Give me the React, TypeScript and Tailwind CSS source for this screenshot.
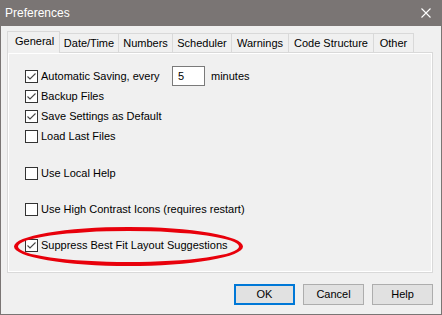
import React from "react";

const tabs = [
  { label: "General", w: "w-[53px]", active: true },
  { label: "Date/Time", w: "w-[60px]" },
  { label: "Numbers", w: "w-[55px]" },
  { label: "Scheduler", w: "w-[60px]" },
  { label: "Warnings", w: "w-[58px]" },
  { label: "Code Structure", w: "w-[86px]" },
  { label: "Other", w: "w-[41px]" },
];

const CheckBox = ({ checked }: { checked?: boolean }) => (
  <span className="mt-[4px] flex h-[13px] w-[13px] shrink-0 items-center justify-center border border-[#333333] bg-white">
    {checked && (
      <svg width="11" height="11" viewBox="0 0 11 11">
        <polyline
          points="1.5,5.5 4,8 9.5,2.5"
          fill="none"
          stroke="#444444"
          strokeWidth="1.1"
        />
      </svg>
    )}
  </span>
);

const Option = ({
  label,
  checked,
  className = "",
}: {
  label: string;
  checked?: boolean;
  className?: string;
}) => (
  <div className={`flex h-5 items-start ${className}`}>
    <CheckBox checked={checked} />
    <span className="ml-[3px] leading-5">{label}</span>
  </div>
);

const DialogButton = ({ label, primary }: { label: string; primary?: boolean }) => (
  <button
    className={`flex h-[21px] w-[61px] items-center justify-center bg-[#e1e1e1] leading-none text-black ${
      primary ? "border-2 border-[#0078d7]" : "border border-[#adadad]"
    }`}
  >
    {label}
  </button>
);

export default function App() {
  return (
    <div className="relative flex h-[315px] w-[442px] flex-col border border-t-0 border-[#7a7574] bg-[#f0f0f0] font-['Liberation_Sans',Arial,sans-serif] text-[11px] text-black">
      {/* title bar */}
      <div className="-mx-px flex h-[26px] shrink-0 items-center justify-between bg-[#7a7574] pl-[5px] pr-[11px] text-[12px] text-white">
        <span>Preferences</span>
        <svg width="10" height="10" viewBox="0 0 10 10">
          <path d="M0.5 0.5 L9.5 9.5 M9.5 0.5 L0.5 9.5" stroke="#ffffff" strokeWidth="1.1" />
        </svg>
      </div>

      <div className="flex flex-1 flex-col pl-[6px] pr-[8px] pt-[5px]">
        {/* tabs */}
        <div className="flex h-[21px] items-end">
          {tabs.map((t) =>
            t.active ? (
              <div
                key={t.label}
                className={`relative z-10 -mb-px flex h-[22px] ${t.w} shrink-0 items-center border border-b-0 border-[#d9d9d9] bg-[#f0f0f0] pb-[2px] pl-[7px]`}
              >
                {t.label}
              </div>
            ) : (
              <div
                key={t.label}
                className={`-ml-px flex h-[19px] ${t.w} shrink-0 items-center justify-center border border-b-0 border-[#d9d9d9] bg-[#f0f0f0]`}
              >
                {t.label}
              </div>
            )
          )}
        </div>

        {/* panel */}
        <div className="flex h-[221px] flex-col border border-[#d9d9d9] pl-[17px] pt-[13px] shadow-[inset_1px_1px_0_#ffffff,inset_-1px_-1px_0_#ffffff]">
          <div className="flex h-5 items-start">
            <CheckBox checked />
            <span className="ml-[3px] w-[131px] shrink-0 leading-5">Automatic Saving, every</span>
            <div className="flex h-5 w-[33px] items-center border border-[#7a7a7a] bg-white pl-[5px]">5</div>
            <span className="ml-[6px] leading-5">minutes</span>
          </div>
          <Option label="Backup Files" checked />
          <Option label="Save Settings as Default" checked />
          <Option label="Load Last Files" />
          <Option label="Use Local Help" className="mt-[17px]" />
          <Option label="Use High Contrast Icons (requires restart)" className="mt-4" />
          <Option label="Suppress Best Fit Layout Suggestions" checked className="mt-4" />
        </div>

        {/* buttons */}
        <div className="mt-[11px] flex justify-end gap-2">
          <DialogButton label="OK" primary />
          <DialogButton label="Cancel" />
          <DialogButton label="Help" />
        </div>
      </div>

      {/* red annotation */}
      <div className="absolute left-[13px] top-[227px] h-[39px] w-[229px] rounded-[50%] border-4 border-[#e8000b]" />
    </div>
  );
}
